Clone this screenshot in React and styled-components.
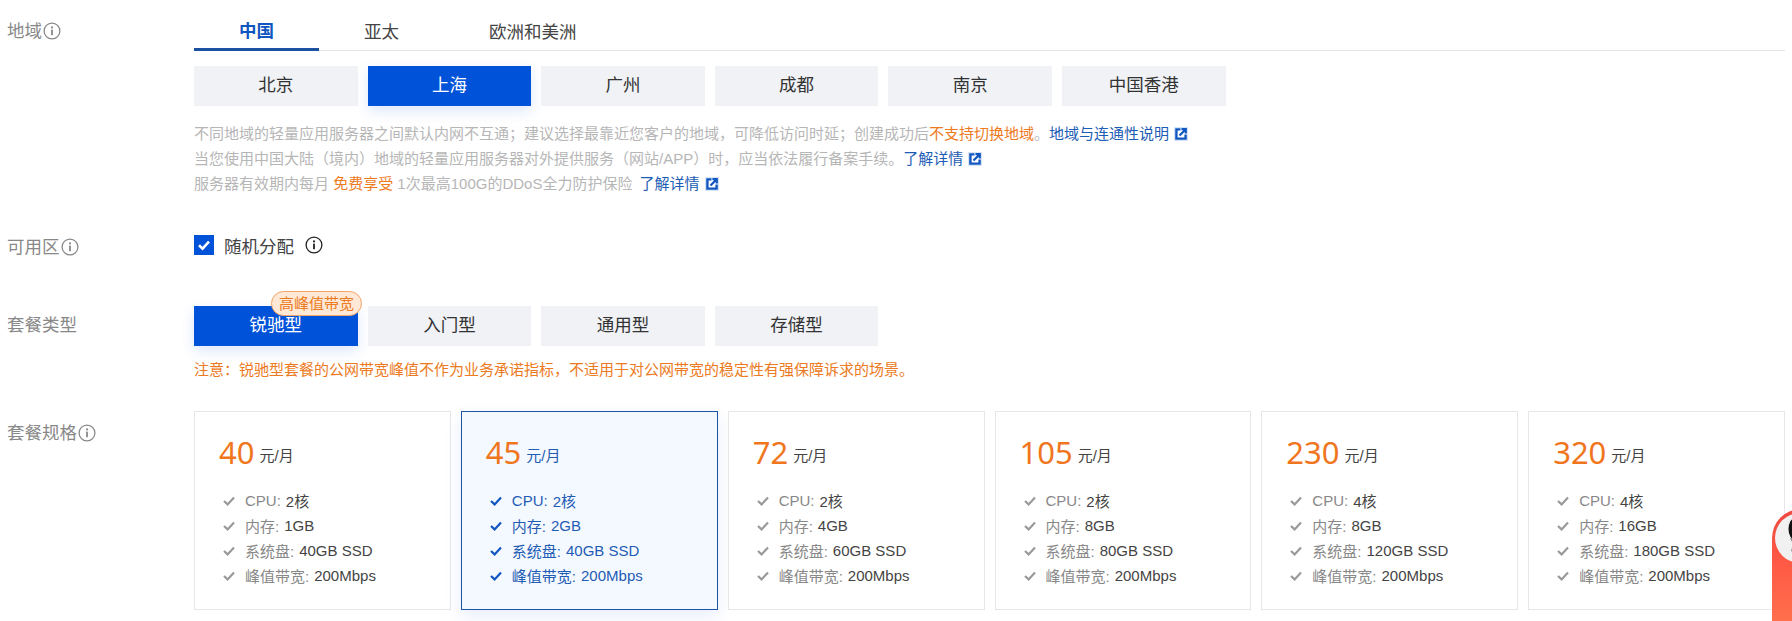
import React from "react";
import styled, { createGlobalStyle } from "styled-components";

const Global = createGlobalStyle`
  html, body { margin: 0; padding: 0; background: #fff; height: 100%; overflow: hidden; }
  body { font-family: "Liberation Sans", "Noto Sans CJK SC", sans-serif; font-size: 15px; color: #333; }
  * { box-sizing: border-box; }
`;

const Page = styled.div`
  width: 1792px;
  height: 621px;
  padding-top: 12px;
  overflow: hidden;
`;
const Row = styled.section`
  display: flex;
  margin-top: ${(p) => p.$top || 0}px;
`;
const Label = styled.div`
  flex: 0 0 194px;
  padding-left: 7px;
  padding-top: ${(p) => p.$pad || 0}px;
  display: flex;
  align-items: flex-start;
  font-size: 17.5px;
  line-height: 24px;
  color: #888;
`;
const LabelIcon = styled.svg`
  width: 18px;
  height: 18px;
  margin: 3px 0 0 1px;
  flex: none;
`;
const Content = styled.div`
  flex: 0 0 1591px;
  min-width: 0;
`;
const Tabs = styled.div`
  display: flex;
  height: 39px;
  border-bottom: 1px solid #e5e5e5;
`;
const Tab = styled.div`
  height: 39px;
  padding: 0 45px 2px;
  display: flex;
  align-items: center;
  font-size: 17.5px;
  font-weight: ${(p) => (p.$active ? 700 : 400)};
  color: ${(p) => (p.$active ? "#0f56c0" : "#444")};
  border-bottom: ${(p) => (p.$active ? "3px solid #1c50a0" : "0")};
`;
const Options = styled.div`
  display: flex;
  gap: 10px;
  margin-top: ${(p) => p.$top || 0}px;
`;
const Option = styled.div`
  position: relative;
  flex: 0 0 163.6px;
  height: 40px;
  padding-bottom: 5px;
  display: flex;
  align-items: center;
  justify-content: center;
  font-size: 17.5px;
  background: ${(p) => (p.$active ? "#0052d9" : "#f0f2f6")};
  color: ${(p) => (p.$active ? "#fff" : "#333")};
  box-shadow: ${(p) => (p.$active ? "0 5px 14px rgba(0,82,217,.14)" : "none")};
`;
const Badge = styled.span`
  position: absolute;
  top: -15px;
  left: 77px;
  width: 91px;
  height: 25px;
  border-radius: 13px;
  border: 1px solid #f3a468;
  background: #ffe9d6;
  color: #ec7a22;
  font-size: 15px;
  line-height: 23px;
  text-align: center;
  white-space: nowrap;
`;
const Help = styled.div`
  margin-top: 15px;
  font-size: 15px;
  line-height: 25px;
  color: #b6b6b6;
  white-space: nowrap;
`;
const Warm = styled.span`
  color: #ee7a1e;
`;
const Link = styled.span`
  color: #1c5cb4;
  margin-left: ${(p) => p.$gap || 0}px;
`;
const ExternalIcon = styled.svg`
  width: 14px;
  height: 14px;
  margin-left: 5px;
  vertical-align: -2px;
`;
const CheckLine = styled.div`
  display: flex;
  align-items: center;
  height: 20px;
  font-size: 17.5px;
  color: #444;
`;
const Checkbox = styled.svg`
  width: 20px;
  height: 20px;
  margin-right: 10px;
`;
const DarkInfo = styled.svg`
  width: 18px;
  height: 18px;
  margin-left: 11px;
`;
const Notice = styled.div`
  margin-top: 13px;
  font-size: 15px;
  line-height: 22px;
  color: #ec7a22;
  white-space: nowrap;
`;
const Cards = styled.div`
  display: grid;
  grid-template-columns: repeat(6, 1fr);
  gap: 10px;
`;
const Card = styled.article`
  height: 199px;
  padding: 19px 24px 0;
  border: 1px solid ${(p) => (p.$active ? "#1b56a6" : "#e4e6ea")};
  background: ${(p) => (p.$active ? "#f4f8ff" : "#fff")};
  box-shadow: ${(p) => (p.$active ? "0 6px 16px rgba(0,82,217,.1)" : "none")};
  color: ${(p) => (p.$active ? "#1f5cb4" : "#444")};
`;
const PriceLine = styled.div`
  display: flex;
  align-items: flex-end;
  height: 42px;
`;
const Price = styled.span`
  font-family: "Noto Sans", "Liberation Sans", sans-serif;
  font-size: 31px;
  line-height: 42px;
  color: #f0761e;
`;
const Unit = styled.span`
  margin: 0 0 7px 5px;
  font-size: 15px;
  line-height: 20px;
`;
const Specs = styled.ul`
  list-style: none;
  margin: 15px 0 0;
  padding: 0 0 0 4px;
`;
const Spec = styled.li`
  display: flex;
  align-items: center;
  height: 25px;
  font-size: 15px;
  white-space: nowrap;
`;
const SpecCheck = styled.svg`
  width: 12px;
  height: 10px;
  margin-right: 10px;
  flex: none;
`;
const SpecName = styled.span`
  color: ${(p) => (p.$active ? "#1f5cb4" : "#888")};
  margin-right: 5px;
`;
const Widget = styled.aside`
  position: fixed;
  left: 1772px;
  top: 509px;
  width: 60px;
  height: 140px;
  padding: 4px 0 0 3px;
  border-radius: 29px 0 0 0;
  background: linear-gradient(180deg, #ee4a42 0%, #ff5a45 40%, #ff7a50 100%);
  box-shadow: 0 0 6px #fff;
`;
const Avatar = styled.svg`
  display: block;
  width: 50px;
  height: 50px;
`;

const InfoGlyph = ({ as: As = LabelIcon, color = "#888" }) => (
  <As viewBox="0 0 18 18" aria-hidden="true">
    <circle cx="9" cy="9" r="7.9" fill="none" stroke={color} strokeWidth="1.3" />
    <circle cx="9" cy="5.4" r="1.05" fill={color} />
    <rect x="8.1" y="7.6" width="1.8" height="5.6" fill={color} />
  </As>
);

const External = () => (
  <ExternalIcon viewBox="0 0 14 14" aria-hidden="true">
    <rect width="14" height="14" fill="#d5e3f8" />
    <rect x="1" y="1" width="12" height="12" fill="#fff" />
    <path d="M6.5 2.4H2.4v9.2h9.2V7.5" fill="none" stroke="#0f56c0" strokeWidth="2.4" />
    <path d="M5.5 8.5 11 3M7.4 2.2h4.4v4.4" fill="none" stroke="#0f56c0" strokeWidth="2.2" />
  </ExternalIcon>
);

const plans = [
  { price: 40, cpu: "2核", mem: "1GB", disk: "40GB SSD" },
  { price: 45, cpu: "2核", mem: "2GB", disk: "40GB SSD", active: true },
  { price: 72, cpu: "2核", mem: "4GB", disk: "60GB SSD" },
  { price: 105, cpu: "2核", mem: "8GB", disk: "80GB SSD" },
  { price: 230, cpu: "4核", mem: "8GB", disk: "120GB SSD" },
  { price: 320, cpu: "4核", mem: "16GB", disk: "180GB SSD" },
];

const SpecRow = ({ name, value, active }) => (
  <Spec>
    <SpecCheck viewBox="0 0 12 10" aria-hidden="true">
      <path d="M1 5l3.6 3.4L11 1.6" fill="none" stroke={active ? "#0f56c0" : "#999"} strokeWidth="2.2" />
    </SpecCheck>
    <SpecName $active={active}>{name}:</SpecName>
    {value}
  </Spec>
);

export default function App() {
  return (
    <Page>
      <Global />
      <Row>
        <Label $pad={7}>
          地域
          <InfoGlyph />
        </Label>
        <Content>
          <Tabs>
            <Tab $active>中国</Tab>
            <Tab>亚太</Tab>
            <Tab>欧洲和美洲</Tab>
          </Tabs>
          <Options $top={15}>
            <Option>北京</Option>
            <Option $active>上海</Option>
            <Option>广州</Option>
            <Option>成都</Option>
            <Option>南京</Option>
            <Option>中国香港</Option>
          </Options>
          <Help>
            <div>
              不同地域的轻量应用服务器之间默认内网不互通；建议选择最靠近您客户的地域，可降低访问时延；创建成功后
              <Warm>不支持切换地域</Warm>。<Link>地域与连通性说明</Link>
              <External />
            </div>
            <div>
              当您使用中国大陆（境内）地域的轻量应用服务器对外提供服务（网站/APP）时，应当依法履行备案手续。
              <Link>了解详情</Link>
              <External />
            </div>
            <div>
              服务器有效期内每月 <Warm>免费享受</Warm> 1次最高100G的DDoS全力防护保险 <Link $gap={3}>了解详情</Link>
              <External />
            </div>
          </Help>
        </Content>
      </Row>
      <Row $top={39}>
        <Label>
          可用区
          <InfoGlyph />
        </Label>
        <Content>
          <CheckLine>
            <Checkbox viewBox="0 0 20 20" aria-hidden="true">
              <rect width="20" height="20" fill="#0052d9" />
              <path d="M5 10.2l3.6 3.4L15 6.6" fill="none" stroke="#fff" strokeWidth="2.6" />
            </Checkbox>
            随机分配
            <InfoGlyph as={DarkInfo} color="#222" />
          </CheckLine>
        </Content>
      </Row>
      <Row $top={47}>
        <Label $pad={7}>套餐类型</Label>
        <Content>
          <Options>
            <Option $active>
              锐驰型
              <Badge>高峰值带宽</Badge>
            </Option>
            <Option>入门型</Option>
            <Option>通用型</Option>
            <Option>存储型</Option>
          </Options>
          <Notice>
            注意：锐驰型套餐的公网带宽峰值不作为业务承诺指标，不适用于对公网带宽的稳定性有强保障诉求的场景。
          </Notice>
        </Content>
      </Row>
      <Row $top={30}>
        <Label $pad={10}>
          套餐规格
          <InfoGlyph />
        </Label>
        <Content>
          <Cards>
            {plans.map((plan) => (
              <Card key={plan.price} $active={plan.active}>
                <PriceLine>
                  <Price>{plan.price}</Price>
                  <Unit>元/月</Unit>
                </PriceLine>
                <Specs>
                  <SpecRow name="CPU" value={plan.cpu} active={plan.active} />
                  <SpecRow name="内存" value={plan.mem} active={plan.active} />
                  <SpecRow name="系统盘" value={plan.disk} active={plan.active} />
                  <SpecRow name="峰值带宽" value="200Mbps" active={plan.active} />
                </Specs>
              </Card>
            ))}
          </Cards>
        </Content>
      </Row>
      <Widget>
        <Avatar viewBox="0 0 50 50" aria-hidden="true">
          <circle cx="25" cy="25" r="25" fill="#f1f1f1" />
          <ellipse cx="20" cy="16" rx="6.5" ry="11" fill="#111" />
          <path d="M15 25l3 6-2 7 3 2 1-8-2-7z" fill="#8f8f8f" />
        </Avatar>
      </Widget>
    </Page>
  );
}
